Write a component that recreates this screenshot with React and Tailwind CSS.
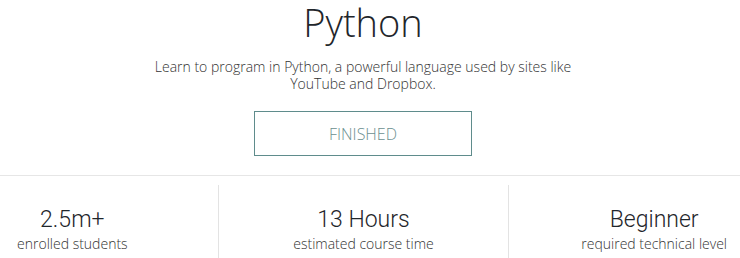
import React from "react";

const stats = [
  { value: "2.5m+", label: "enrolled students" },
  { value: "13 Hours", label: "estimated course time" },
  { value: "Beginner", label: "required technical level" },
];

export default function App() {
  return (
    <div
      className="w-[740px] h-[258px] overflow-hidden bg-white"
      style={{ fontFamily: '"Open Sans", "Noto Sans", sans-serif' }}
    >
      <div className="w-[872px] ml-[-73px] flex flex-col items-center">
        <h1 className="mt-0 text-[38px] leading-[44px] font-light text-[#1f262b]">
          Python
        </h1>
        <p className="mt-[14px] w-[460px] text-center text-[14px] leading-[17px] font-light text-[#333]">
          Learn to program in Python, a powerful language used by sites like YouTube and Dropbox.
        </p>
        <div className="mt-[19px] w-[218px] h-[45px] border border-[#5f8c8c] flex items-center justify-center text-[16px] font-light text-[#6b8f8f]">
          FINISHED
        </div>
        <div className="mt-[19px] w-full border-t border-[#e6e6e6]" />
        <div className="mt-[9px] w-full grid grid-cols-3">
          {stats.map((s, i) => (
            <div
              key={s.label}
              className={`flex flex-col items-center pt-[20px] h-[80px] ${
                i > 0 ? "border-l border-[#e3e3e3]" : ""
              }`}
            >
              <div className="font-['Roboto',sans-serif] text-[23px] leading-[30px] font-light text-[#1f262b]">
                {s.value}
              </div>
              <div className="text-[14px] leading-[18px] font-light text-[#333]">
                {s.label}
              </div>
            </div>
          ))}
        </div>
      </div>
    </div>
  );
}
